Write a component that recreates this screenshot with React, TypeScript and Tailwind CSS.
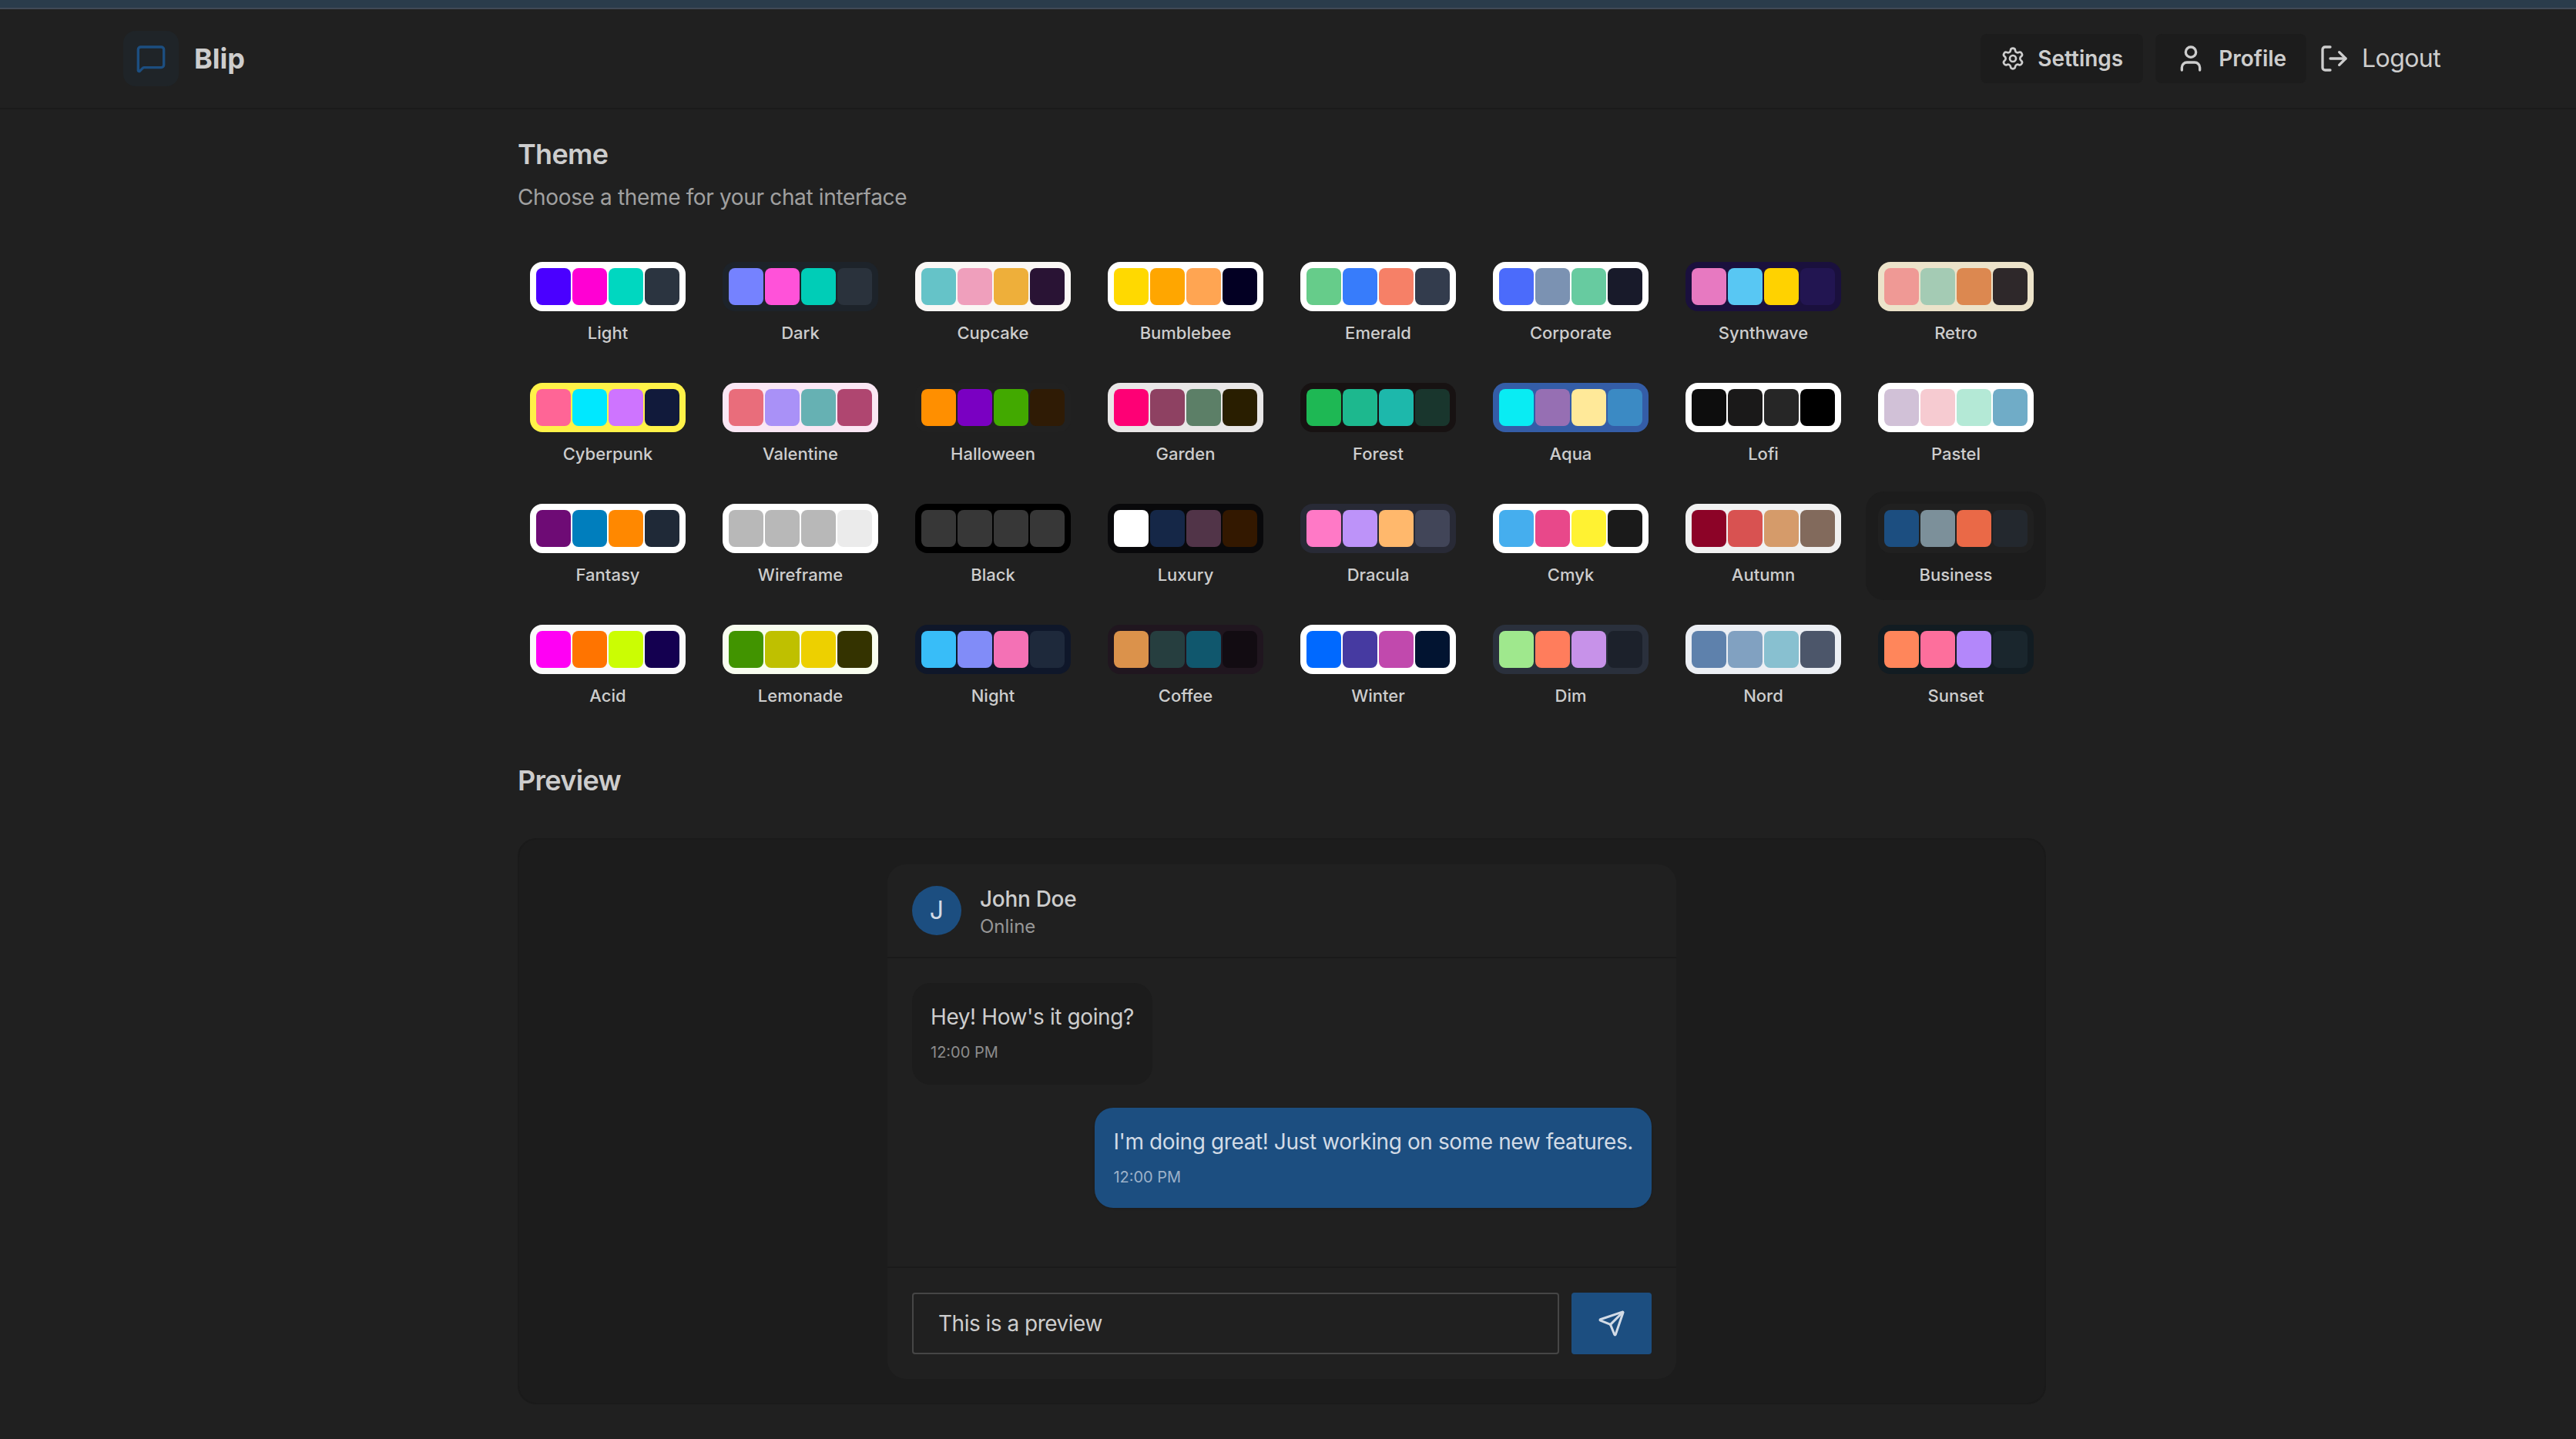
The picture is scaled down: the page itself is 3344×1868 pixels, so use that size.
import { MessageSquare, Settings, User, LogOut, Send } from "lucide-react";

type Theme = { name: string; bg: string; c: [string, string, string, string]; hover?: boolean };

const themes: Theme[] = [
  { name: "Light", bg: "bg-[#ffffff]", c: ["bg-[#4a00ff]", "bg-[#ff00d3]", "bg-[#00d7c0]", "bg-[#2b3440]"] },
  { name: "Dark", bg: "bg-[#1d232a]", c: ["bg-[#7582ff]", "bg-[#ff52d9]", "bg-[#00cdb7]", "bg-[#2a323c]"] },
  { name: "Cupcake", bg: "bg-[#faf7f5]", c: ["bg-[#65c3c8]", "bg-[#ef9fbc]", "bg-[#eeaf3a]", "bg-[#291334]"] },
  { name: "Bumblebee", bg: "bg-[#ffffff]", c: ["bg-[#ffd900]", "bg-[#ffa600]", "bg-[#ffa552]", "bg-[#030023]"] },
  { name: "Emerald", bg: "bg-[#ffffff]", c: ["bg-[#66cc8a]", "bg-[#377cfb]", "bg-[#f68067]", "bg-[#333c4d]"] },
  { name: "Corporate", bg: "bg-[#ffffff]", c: ["bg-[#4b6bfb]", "bg-[#7b92b2]", "bg-[#67cba0]", "bg-[#181a2a]"] },
  { name: "Synthwave", bg: "bg-[#1a103d]", c: ["bg-[#e779c1]", "bg-[#58c7f3]", "bg-[#ffd200]", "bg-[#221551]"] },
  { name: "Retro", bg: "bg-[#ece3ca]", c: ["bg-[#ef9995]", "bg-[#a4cbb4]", "bg-[#dc8850]", "bg-[#2e282a]"] },
  { name: "Cyberpunk", bg: "bg-[#fff248]", c: ["bg-[#ff6596]", "bg-[#00e8ff]", "bg-[#ce74ff]", "bg-[#111a3b]"] },
  { name: "Valentine", bg: "bg-[#fae7f4]", c: ["bg-[#e96d7b]", "bg-[#a991f7]", "bg-[#66b1b3]", "bg-[#af4670]"] },
  { name: "Halloween", bg: "bg-[#212121]", c: ["bg-[#ff8f00]", "bg-[#7a00c2]", "bg-[#42a900]", "bg-[#2f1b05]"] },
  { name: "Garden", bg: "bg-[#e9e7e7]", c: ["bg-[#fe0075]", "bg-[#8e4162]", "bg-[#5c7f67]", "bg-[#291e00]"] },
  { name: "Forest", bg: "bg-[#171212]", c: ["bg-[#1eb854]", "bg-[#1db88e]", "bg-[#1db8ab]", "bg-[#19362d]"] },
  { name: "Aqua", bg: "bg-[#345da7]", c: ["bg-[#09ecf3]", "bg-[#966fb3]", "bg-[#ffe999]", "bg-[#3b8ac4]"] },
  { name: "Lofi", bg: "bg-[#ffffff]", c: ["bg-[#0d0d0d]", "bg-[#1a1919]", "bg-[#262626]", "bg-[#000000]"] },
  { name: "Pastel", bg: "bg-[#ffffff]", c: ["bg-[#d1c1d7]", "bg-[#f6cbd1]", "bg-[#b4e9d6]", "bg-[#70acc7]"] },
  { name: "Fantasy", bg: "bg-[#ffffff]", c: ["bg-[#6e0b75]", "bg-[#007ebd]", "bg-[#ff8800]", "bg-[#1f2937]"] },
  { name: "Wireframe", bg: "bg-[#ffffff]", c: ["bg-[#b8b8b8]", "bg-[#b8b8b8]", "bg-[#b8b8b8]", "bg-[#ebebeb]"] },
  { name: "Black", bg: "bg-[#000000]", c: ["bg-[#373737]", "bg-[#373737]", "bg-[#373737]", "bg-[#373737]"] },
  { name: "Luxury", bg: "bg-[#09090b]", c: ["bg-[#ffffff]", "bg-[#152747]", "bg-[#513448]", "bg-[#331800]"] },
  { name: "Dracula", bg: "bg-[#282a36]", c: ["bg-[#ff79c6]", "bg-[#bd93f9]", "bg-[#ffb86c]", "bg-[#414558]"] },
  { name: "Cmyk", bg: "bg-[#ffffff]", c: ["bg-[#45aeee]", "bg-[#e8488a]", "bg-[#fff232]", "bg-[#1a1a1a]"] },
  { name: "Autumn", bg: "bg-[#f1f1f1]", c: ["bg-[#8c0327]", "bg-[#d85251]", "bg-[#d59b6a]", "bg-[#826a5c]"] },
  { name: "Business", bg: "bg-[#202020]", c: ["bg-[#1c4e80]", "bg-[#7c909a]", "bg-[#ea6947]", "bg-[#23282e]"], hover: true },
  { name: "Acid", bg: "bg-[#fafafa]", c: ["bg-[#ff00f4]", "bg-[#ff7400]", "bg-[#cbfd03]", "bg-[#140050]"] },
  { name: "Lemonade", bg: "bg-[#f8fdef]", c: ["bg-[#419400]", "bg-[#bfc000]", "bg-[#edd000]", "bg-[#343300]"] },
  { name: "Night", bg: "bg-[#0f172a]", c: ["bg-[#38bdf8]", "bg-[#818cf8]", "bg-[#f471b5]", "bg-[#1e293b]"] },
  { name: "Coffee", bg: "bg-[#20161f]", c: ["bg-[#db924b]", "bg-[#263e3f]", "bg-[#10576d]", "bg-[#120c12]"] },
  { name: "Winter", bg: "bg-[#ffffff]", c: ["bg-[#0069ff]", "bg-[#463aa1]", "bg-[#c149ad]", "bg-[#021431]"] },
  { name: "Dim", bg: "bg-[#2a303c]", c: ["bg-[#9fe88d]", "bg-[#ff7d5c]", "bg-[#c792e9]", "bg-[#1c212b]"] },
  { name: "Nord", bg: "bg-[#eceff4]", c: ["bg-[#5e81ac]", "bg-[#81a1c1]", "bg-[#88c0d0]", "bg-[#4c566a]"] },
  { name: "Sunset", bg: "bg-[#121c22]", c: ["bg-[#ff865b]", "bg-[#fd6f9c]", "bg-[#b387fa]", "bg-[#1a262d]"] },
];

function ThemeCard({ t }: { t: Theme }) {
  return (
    <div className={`flex flex-col items-center gap-[12px] rounded-[24px] p-[16px] h-[141px] ${t.hover ? "bg-[#1c1c1c]" : ""}`}>
      <div className={`grid h-[64px] w-full grid-cols-4 gap-[2px] rounded-[16px] p-[8px] ${t.bg}`}>
        {t.c.map((c, i) => (
          <div key={i} className={`rounded-[8px] ${c}`} />
        ))}
      </div>
      <div className="text-[22px] leading-[32px] font-medium text-[#cdcdcd]">{t.name}</div>
    </div>
  );
}

export default function App() {
  return (
    <div className="min-h-[1868px] bg-[#202020] font-['Inter',sans-serif] text-[#cdcdcd]">
      <div className="h-[12px] border-b-2 border-[#414a56] bg-[#2a3c4b]" />
      <header className="flex h-[130px] items-center justify-between border-b-2 border-[#1a1a1a] pl-[160px] pr-[160px]">
        <div className="flex items-center gap-[20px]">
          <div className="flex h-[72px] w-[72px] items-center justify-center rounded-[16px] bg-[#1f2428]">
            <MessageSquare size={40} className="text-[#1c4e80]" />
          </div>
          <span className="text-[36px] font-bold leading-[56px] text-[#cdcdcd]">Blip</span>
        </div>
        <nav className="flex items-center gap-[16px]">
          <button className="flex h-[64px] items-center gap-[16px] rounded-[8px] bg-[#1c1c1c] px-[26px] text-[28px] font-semibold text-[#cdcdcd]">
            <Settings size={32} />
            Settings
          </button>
          <button className="flex h-[64px] items-center gap-[16px] rounded-[8px] bg-[#1c1c1c] px-[26px] text-[28px] font-semibold text-[#cdcdcd]">
            <User size={40} />
            Profile
          </button>
          <button className="flex h-[64px] items-center gap-[16px] pr-[16px] text-[32px] font-normal tracking-[-0.6px] text-[#cdcdcd]">
            <LogOut size={40} />
            Logout
          </button>
        </nav>
      </header>

      <main className="ml-[672px] w-[1984px] pt-[30px]">
        <h2 className="text-[36px] font-semibold leading-[56px] tracking-[-0.7px] text-[#cdcdcd]">Theme</h2>
        <p className="mt-[8px] text-[28px] leading-[40px] tracking-[-0.35px] text-[#a0a0a0]">Choose a theme for your chat interface</p>

        <div className="mt-[48px] grid grid-cols-8 gap-x-[16px] gap-y-[16px]">
          {themes.map((t) => (
            <ThemeCard key={t.name} t={t} />
          ))}
        </div>

        <h2 className="mt-[49px] text-[36px] font-semibold leading-[56px] tracking-[-0.7px] text-[#cdcdcd]">Preview</h2>

        <section className="mt-[47px] flex h-[735px] justify-center rounded-[24px] border-2 border-[#1a1a1a] bg-[#1c1c1c] p-[32px]">
          <div className="flex h-[668px] w-[1024px] flex-col rounded-[24px] bg-[#202020]">
            <div className="flex h-[122px] items-center gap-[24px] border-b-2 border-[#1a1a1a] px-[32px]">
              <div className="flex h-[64px] w-[64px] items-center justify-center rounded-full bg-[#1c4e80] text-[32px] text-[#d2dbe6]">J</div>
              <div className="flex flex-col pt-[6px]">
                <span className="text-[28px] font-medium leading-[36px] tracking-[-0.3px] text-[#cdcdcd]">John Doe</span>
                <span className="text-[24px] leading-[36px] text-[#969696]">Online</span>
              </div>
            </div>

            <div className="flex h-[400px] flex-col items-start gap-[30px] p-[32px]">
              <div className="h-[132px] rounded-[24px] bg-[#1c1c1c] px-[24px] py-[24px]">
                <div className="text-[28px] leading-[40px] tracking-[-0.4px] text-[#cdcdcd]">Hey! How's it going?</div>
                <div className="mt-[8px] text-[20px] leading-[36px] text-[#8c8c8c]">12:00 PM</div>
              </div>
              <div className="h-[130px] self-end rounded-[24px] bg-[#1c4e80] px-[24px] py-[24px] shadow-sm">
                <div className="text-[28px] leading-[40px] tracking-[-0.4px] text-[#d2dbe6]">I'm doing great! Just working on some new features.</div>
                <div className="mt-[8px] text-[20px] leading-[36px] text-[#9cb1c9]">12:00 PM</div>
              </div>
            </div>

            <div className="flex gap-[16px] border-t-2 border-[#1a1a1a] p-[32px]">
              <div className="flex h-[80px] w-[840px] items-center rounded-[4px] border-2 border-[#464646] px-[32px] text-[28px] tracking-[-0.5px] text-[#cdcdcd]">
                This is a preview
              </div>
              <button className="flex h-[80px] w-[104px] items-center justify-center rounded-[4px] bg-[#1c4e80] text-[#d2dbe6]">
                <Send size={36} />
              </button>
            </div>
          </div>
        </section>
      </main>
    </div>
  );
}
